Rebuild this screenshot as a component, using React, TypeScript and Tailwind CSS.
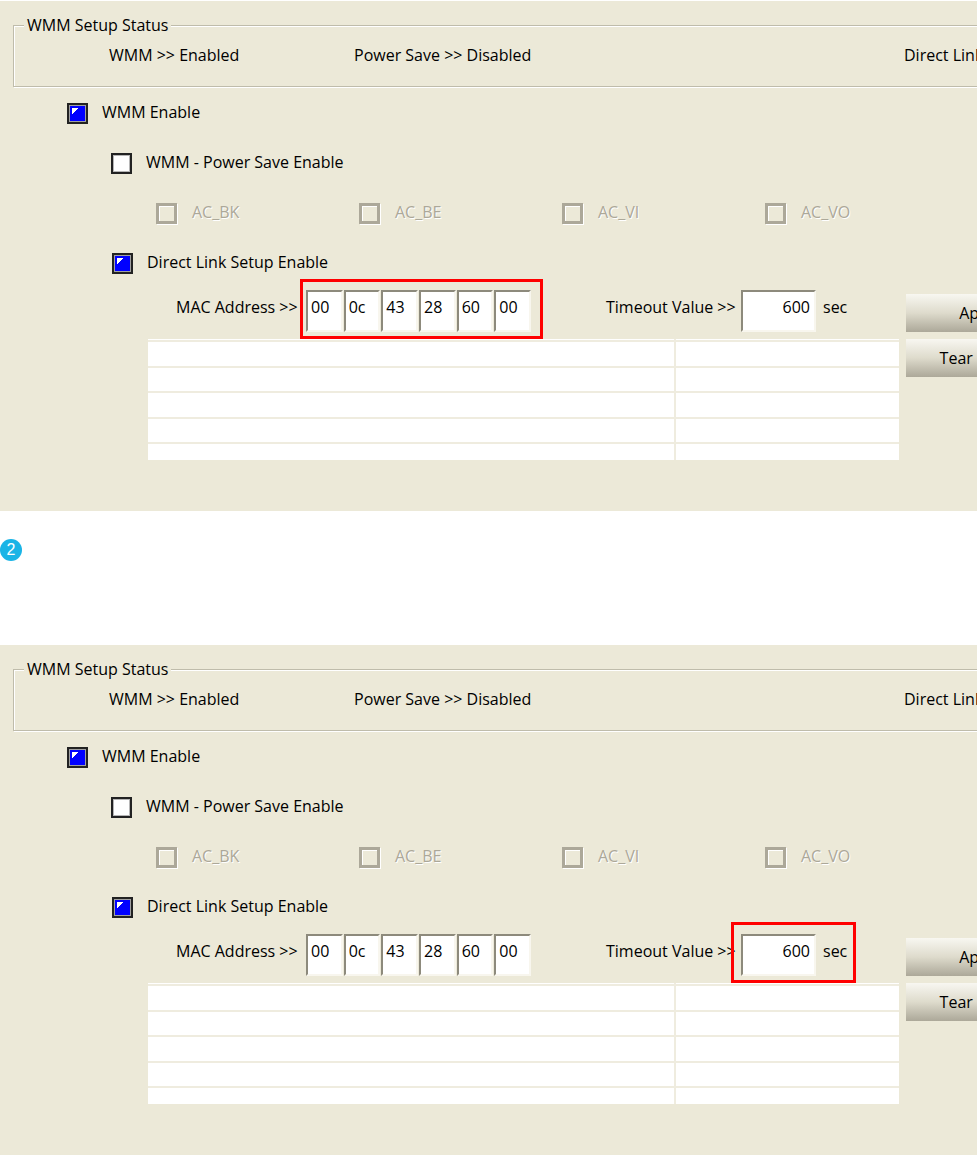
import { useId } from "react";

type CheckProps = {
  label: string;
  checked?: boolean;
  disabled?: boolean;
};

function Check({ label, checked = false, disabled = false }: CheckProps) {
  const id = useId();
  return (
    <div className="flex h-[22px] items-center gap-[14px]">
      <span className="relative flex">
        <input
          id={id}
          type="checkbox"
          defaultChecked={checked}
          disabled={disabled}
          className="peer size-[21px] appearance-none border-2 border-[#222222] bg-white shadow-[inset_0_0_0_1px_#b5b5b5] checked:bg-[#0000ff] checked:shadow-[inset_0_0_0_1px_#a0a0a0] disabled:border-[3px] disabled:border-[#aca899] disabled:bg-[#ece9d8] disabled:shadow-[1px_1px_0_#ffffff,inset_1px_1px_0_#ffffff]"
        />
        <svg
          viewBox="0 0 21 21"
          className="pointer-events-none absolute inset-0 hidden size-[21px] peer-checked:block"
          aria-hidden="true"
        >
          <path d="M5 5h6v1h-1v1H9v1H8v1H7v1H6v1H5z" fill="#ffffff" />
        </svg>
      </span>
      <label
        htmlFor={id}
        className={
          disabled
            ? "pb-[2px] pl-px text-[#aca899] [text-shadow:1px_1px_0_#ffffff]"
            : "pb-[2px]"
        }
      >
        {label}
      </label>
    </div>
  );
}

const FIELD =
  "h-[42px] min-w-0 border-2 border-t-[#8d8a7c] border-r-[#f8f6ee] border-b-[#f8f6ee] border-l-[#8d8a7c] bg-white pb-2 outline-none";
const BUTTON =
  "h-[38px] w-full bg-linear-to-b from-[#f8f7f1] via-[#dedbcc] to-[#aca899] text-center";

const MAC = ["00", "0c", "43", "28", "60", "00"];
const QUEUES = ["AC_BK", "AC_BE", "AC_VI", "AC_VO"];

function Highlight({ className }: { className: string }) {
  return (
    <div
      className={`pointer-events-none absolute border-[3px] border-[#ff0000] ${className}`}
    />
  );
}

function WmmPanel({ highlight }: { highlight: "mac" | "timeout" }) {
  const timeoutId = useId();
  return (
    <section className="overflow-hidden bg-[#ece9d8] pt-[14px] pb-[51px]">
      <fieldset className="-mr-20 ml-[13px] h-[72px] border border-[#bfbcab] pl-[95px] shadow-[1px_1px_0_#ffffff,inset_1px_1px_0_#ffffff]">
        <legend className="-ml-[85px] bg-[#ece9d8] px-[3px]">WMM Setup Status</legend>
        <div className="grid grid-cols-[245px_550px_auto] pt-[10px]">
          <span>WMM &gt;&gt; Enabled</span>
          <span>Power Save &gt;&gt; Disabled</span>
          <span className="whitespace-nowrap">Direct Link</span>
        </div>
      </fieldset>

      <div className="flex flex-col gap-7 pt-[15px]">
        <div className="pl-[67px]">
          <Check label="WMM Enable" checked />
        </div>
        <div className="pl-[111px]">
          <Check label="WMM - Power Save Enable" />
        </div>
        <div className="grid grid-cols-[repeat(4,203px)] pl-[156px]">
          {QUEUES.map((name) => (
            <Check key={name} label={name} disabled />
          ))}
        </div>
        <div className="pl-[112px]">
          <Check label="Direct Link Setup Enable" checked />
        </div>
      </div>

      <div className="flex items-start gap-[7px] pt-4 pl-[148px]">
        <div className="w-[751px] shrink-0">
          <div className="flex items-start leading-[34px]">
            <span className="w-[158px] shrink-0 pl-7">MAC Address &gt;&gt;</span>
            <div className="relative grid w-[225px] grid-cols-6 gap-px">
              {MAC.map((octet, i) => (
                <input
                  key={i}
                  aria-label={`MAC octet ${i + 1}`}
                  defaultValue={octet}
                  maxLength={2}
                  className={`${FIELD} w-full pl-[3px]`}
                />
              ))}
              {highlight === "mac" && (
                <Highlight className="-top-[11px] -right-3 -bottom-[7px] -left-[6px]" />
              )}
            </div>
            <label htmlFor={timeoutId} className="w-[210px] shrink-0 pl-[75px]">
              Timeout Value &gt;&gt;
            </label>
            <div className="relative flex gap-[7px]">
              <input
                id={timeoutId}
                defaultValue="600"
                className={`${FIELD} w-[75px] pr-1 text-right`}
              />
              <span>sec</span>
              {highlight === "timeout" && (
                <Highlight className="-top-[12px] -right-[9px] -bottom-[7px] -left-[10px]" />
              )}
            </div>
          </div>
          <table className="mt-[7px] w-full table-fixed border-collapse bg-white">
            <colgroup>
              <col className="w-[527px]" />
              <col />
            </colgroup>
            <tbody>
              {["h-[2px]", "h-[26px]", "h-[25px]", "h-[26px]", "h-[25px]", "h-[17px]"].map(
                (height, i) => (
                  <tr key={i} className={`${height} border-b-2 border-[#efecdf] last:border-b-0`}>
                    <td className="border-r-2 border-[#efecdf] p-0" />
                    <td className="p-0" />
                  </tr>
                ),
              )}
            </tbody>
          </table>
        </div>
        <div className="flex w-[148px] shrink-0 flex-col gap-[7px] pt-1">
          <button type="button" className={BUTTON}>
            Apply
          </button>
          <button type="button" className={BUTTON}>
            Tear Down
          </button>
        </div>
      </div>
    </section>
  );
}

export default function App() {
  return (
    <main className="bg-white pt-px font-['Open_Sans',sans-serif] text-base leading-5 text-black">
      <WmmPanel highlight="mac" />
      <div className="flex h-[134px] items-start pt-7">
        <span className="flex size-[22px] items-center justify-center rounded-full bg-[#1ab4e6] font-['Liberation_Sans',sans-serif] text-base leading-none text-white">
          2
        </span>
      </div>
      <WmmPanel highlight="timeout" />
    </main>
  );
}
